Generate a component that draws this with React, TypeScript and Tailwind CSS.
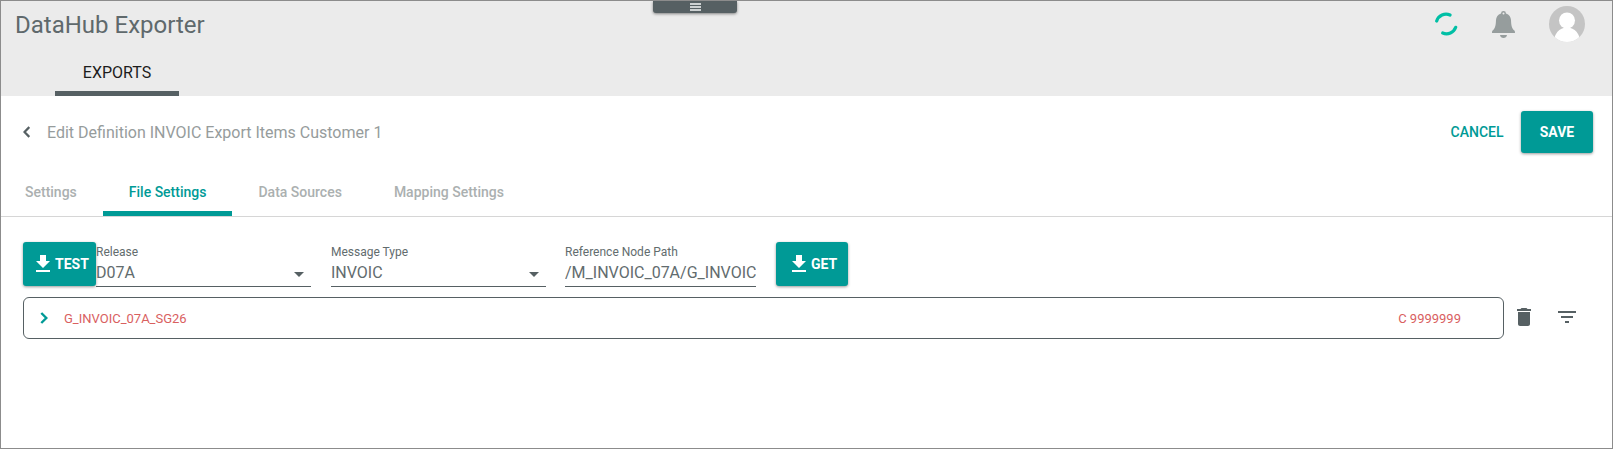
import React from "react";

function DownloadIcon() {
  return (
    <svg className="size-6 shrink-0" viewBox="0 0 24 24" fill="currentColor">
      <path d="M19 9h-4V3H9v6H5l7 7 7-7zM5 18v2h14v-2H5z" />
    </svg>
  );
}

const raised =
  "flex items-center rounded-[3px] bg-[#009a96] text-sm font-bold text-white shadow-[0_1px_3px_rgba(0,0,0,0.4)]";

function TopBar() {
  return (
    <header className="relative h-[95px] shrink-0 bg-[#ebebeb] text-[#566063]">
      <div className="flex h-[46px] items-start justify-between pl-[14px] pr-[27px]">
        <h1 className="pt-[8px] text-2xl leading-8 text-[#5f696c]">DataHub Exporter</h1>
        <div className="flex items-center pt-[5px]">
          <svg className="mr-[34px] size-6" viewBox="0 0 24 24" fill="none" stroke="#00bfa5" strokeWidth="3.200" strokeLinecap="round">
            <path d="M2.700 9A9.800 9.800 0 0 1 16 3M21.700 15.300A9.800 9.800 0 0 1 8.700 21" />
          </svg>
          <svg className="mr-[34px] h-[27px] w-[23px]" viewBox="0 0 23 27" fill="#969d9d">
            <path fillRule="evenodd" d="M11.500 0a2.500 2.500 0 0 1 2.500 2.400c3.200 1 4.800 3.600 5 6.600.2 5.600.8 8.500 3.300 10.400.5.400.7 1 .7 2.600H0c0-1.600.2-2.200.7-2.600C3.200 17.500 3.800 14.600 4 9c.2-3 1.800-5.600 5-6.600A2.500 2.500 0 0 1 11.500 0zm0 1.500a1 1 0 1 0 0 2 1 1 0 0 0 0-2zM8 24h7c-.2 1.800-1.700 3-3.500 3S8.200 25.800 8 24z" />
          </svg>
          <svg className="size-9" viewBox="0 0 36 36">
            <defs>
              <clipPath id="avatar">
                <circle cx="18" cy="18" r="18" />
              </clipPath>
            </defs>
            <g clipPath="url(#avatar)">
              <path fill="#c4c4c4" d="M0 0h36v36H0z" />
              <circle cx="18" cy="14.500" r="8" fill="#fff" />
              <path fill="#fff" d="M5 36c0-8 5-14.500 13-14.500S31 28 31 36z" />
            </g>
          </svg>
        </div>
      </div>
      <nav className="ml-[54px] flex h-[49px] w-[124px] justify-center border-b-[5px] border-[#566063] pt-[16px] text-base leading-5 text-[#1c1c1c]">
        EXPORTS
      </nav>
      <button className="absolute left-[652px] top-0 flex h-3 w-[84px] justify-center rounded-b-[3px] bg-[#566063] pt-[2px] shadow-[0_1px_3px_rgba(0,0,0,0.45)]">
        <svg className="h-[8px] w-[11px]" viewBox="0 0 11 8" fill="#cdd1d2">
          <path d="M0 0h11v2H0zM0 3h11v2H0zM0 6h11v2H0z" />
        </svg>
      </button>
    </header>
  );
}

function Tab({ label, active = false }: { label: string; active?: boolean }) {
  return (
    <div
      className={
        active
          ? "h-[49px] border-b-[5px] border-[#009a96] px-[26px] pt-[15px] text-[#009a96]"
          : "h-[49px] px-[26px] pt-[15px] text-[#abb0b0]"
      }
    >
      {label}
    </div>
  );
}

function Field({ label, value, select = false }: { label: string; value: string; select?: boolean }) {
  return (
    <div className={select ? "w-[215px]" : "w-[191px]"}>
      <div className="pt-[2px] text-xs leading-4 text-[#626c6e]">{label}</div>
      <div className="flex h-[27px] items-center justify-between overflow-hidden border-b border-[#566063]">
        <span className="whitespace-nowrap text-base leading-6 text-[#626c6e]">{value}</span>
        {select && (
          <svg className="mr-[7px] mt-[2px] h-[5px] w-[10px] shrink-0" viewBox="0 0 10 5" fill="currentColor">
            <path d="M0 0h10L5 5z" />
          </svg>
        )}
      </div>
    </div>
  );
}

export default function App() {
  return (
    <div className="flex h-[449px] w-[1613px] flex-col overflow-hidden border border-[#8c8c8c] bg-white font-['Roboto',sans-serif] text-[#566063]">
      <TopBar />
      <div className="flex h-[71px] shrink-0 items-center pl-[22px] pr-[19px]">
        <svg className="mr-[17px] h-[12px] w-[7px]" viewBox="0 0 7 12" fill="none" stroke="currentColor" strokeWidth="2.300">
          <path d="M6.300 1 1.500 6l4.800 5" />
        </svg>
        <div className="flex-1 pt-0.5 text-base text-[#969c9c]">Edit Definition INVOIC Export Items Customer 1</div>
        <button className="mr-[17.5px] pt-px text-sm font-medium text-[#009a96]">CANCEL</button>
        <button className={`${raised} h-[42px] w-[72px] justify-center pt-px`}>SAVE</button>
      </div>
      <div className="flex h-[50px] shrink-0 border-b border-[#d6d6d6] text-sm font-medium">
        <div className="-ml-[2px] flex">
          <Tab label="Settings" />
          <Tab label="File Settings" active />
          <Tab label="Data Sources" />
          <Tab label="Mapping Settings" />
        </div>
      </div>
      <main className="pl-[22px] pt-[25px]">
        <div className="flex h-[45px]">
          <button className={`${raised} h-11 w-[73px] pl-2`}>
            <DownloadIcon />
            TEST
          </button>
          <div className="mr-5 flex gap-x-5">
            <Field label="Release" value="D07A" select />
            <div className="-mr-px">
              <Field label="Message Type" value="INVOIC" select />
            </div>
            <Field label="Reference Node Path" value="/M_INVOIC_07A/G_INVOIC" />
          </div>
          <button className={`${raised} h-11 w-[72px] pl-[11px]`}>
            <DownloadIcon />
            GET
          </button>
        </div>
        <div className="mt-[10px] flex items-start">
          <div className="flex h-[42px] w-[1481px] items-center rounded-[6px] border border-[#566063] pl-4 pr-[42px] text-[13px] text-[#d9605f]">
            <svg className="mr-4 h-[12px] w-[8px]" viewBox="0 0 8 12" fill="none" stroke="#009a96" strokeWidth="2.400">
              <path d="m1.300 1 5 5-5 5" />
            </svg>
            <span className="flex-1 pt-px">G_INVOIC_07A_SG26</span>
            <span className="pt-px">C 9999999</span>
          </div>
          <svg className="ml-2 mt-2 size-6" viewBox="0 0 24 24" fill="currentColor">
            <path d="M6 19c0 1.100.9 2 2 2h8c1.100 0 2-.9 2-2V7H6v12zM19 4h-3.500l-1-1h-5l-1 1H5v2h14V4z" />
          </svg>
          <svg className="ml-[19px] mt-2 size-6" viewBox="0 0 24 24" fill="currentColor">
            <path d="M10 18h4v-2h-4v2zM3 6v2h18V6H3zm3 7h12v-2H6v2z" />
          </svg>
        </div>
      </main>
    </div>
  );
}
